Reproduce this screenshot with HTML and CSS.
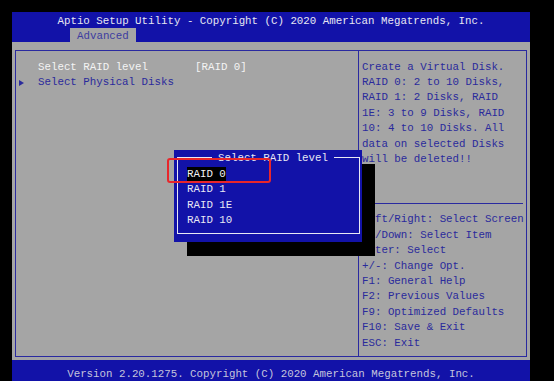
FILE: index.html
```html
<!DOCTYPE html>
<html>
<head>
<meta charset="utf-8">
<link rel="stylesheet" href="styles.css">
</head>
<body>
<div class="screen">
  <header class="top">
    <div class="title">Aptio Setup Utility - Copyright (C) 2020 American Megatrends, Inc.</div>
    <div class="tabs"><span class="tab">Advanced</span></div>
  </header>
  <main class="main">
    <div class="frame">
      <section class="left">
        <div class="row"><span class="gutter"></span><span class="label">Select RAID level</span><span class="value">[RAID 0]</span></div>
        <div class="row link"><span class="gutter"><span class="arrow"></span></span><span>Select Physical Disks</span></div>
      </section>
      <aside class="help">
        <div class="desc">
          <div>Create a Virtual Disk.</div>
          <div>RAID 0: 2 to 10 Disks,</div>
          <div>RAID 1: 2 Disks, RAID</div>
          <div>1E: 3 to 9 Disks, RAID</div>
          <div>10: 4 to 10 Disks. All</div>
          <div>data on selected Disks</div>
          <div>will be deleted!!</div>
        </div>
        <div class="sep"></div>
        <div class="keys">
          <div>Left/Right: Select Screen</div>
          <div>Up/Down: Select Item</div>
          <div>Enter: Select</div>
          <div>+/-: Change Opt.</div>
          <div>F1: General Help</div>
          <div>F2: Previous Values</div>
          <div>F9: Optimized Defaults</div>
          <div>F10: Save &amp; Exit</div>
          <div>ESC: Exit</div>
        </div>
      </aside>
    </div>
    <div class="popup">
      <div class="popup-border"></div>
      <div class="popup-title">Select RAID level</div>
      <ul class="options">
        <li><span class="sel">RAID 0</span></li>
        <li>RAID 1</li>
        <li>RAID 1E</li>
        <li>RAID 10</li>
      </ul>
    </div>
    <div class="mark"></div>
  </main>
  <footer class="foot">Version 2.20.1275. Copyright (C) 2020 American Megatrends, Inc.</footer>
</div>
</body>
</html>
```

FILE: styles.css
```css
html, body {
  margin: 0;
  padding: 0;
}
body {
  background: #000;
  width: 554px;
  height: 381px;
  overflow: hidden;
  font-family: "Liberation Mono", "DejaVu Sans Mono", monospace;
  font-size: 10.79px;
  line-height: 15.4px;
}
.screen {
  margin-left: 12px;
  padding-top: 12px;
  width: 518px;
}
.top {
  background: #1212a8;
  height: 30px;
}
.title {
  height: 16px;
  line-height: 19px;
  text-align: center;
  color: #e6e6f2;
  white-space: nowrap;
}
.tabs {
  height: 14px;
  padding-left: 58px;
}
.tab {
  display: inline-block;
  height: 14px;
  line-height: 16px;
  padding: 0 7px;
  background: #a5a5a5;
  color: #3c3ca0;
}
.main {
  position: relative;
  background: #a5a5a5;
  height: 318px;
  box-sizing: border-box;
  padding: 8px 3px 3px 3px;
}
.frame {
  height: 100%;
  box-sizing: border-box;
  border: 1px solid #2a2aa0;
  display: flex;
}
.left {
  width: 343px;
  box-sizing: border-box;
  border-right: 1px solid #2a2aa0;
  padding: 8.5px 0 0 3px;
}
.row {
  display: flex;
  height: 15.4px;
  white-space: nowrap;
  color: #f4f4f4;
}
.row.link {
  color: #2a2a9c;
}
.gutter {
  width: 19px;
  display: flex;
  align-items: center;
}
.arrow {
  width: 0;
  height: 0;
  border-top: 3.5px solid transparent;
  border-bottom: 3.5px solid transparent;
  border-left: 5px solid #2a2a9c;
}
.label {
  width: 157px;
}
.help {
  flex: 1;
  padding: 8.5px 0 0 3px;
  color: #2a2a9c;
  white-space: nowrap;
}
.sep {
  height: 1px;
  background: #2a2aa0;
  margin: 35.5px 3px 8.5px -2px;
}
.popup {
  position: absolute;
  left: 162px;
  top: 108px;
  width: 188px;
  height: 92px;
  background: #1212a8;
  box-shadow: 13px 14px 0 0 #000;
  color: #e8e8f4;
}
.popup-border {
  position: absolute;
  left: 3px;
  right: 2px;
  top: 7px;
  bottom: 8px;
  border: 1px solid #e8e8f4;
}
.popup-title {
  position: absolute;
  left: 38px;
  top: 1px;
  padding: 0 6px;
  background: #1212a8;
  white-space: nowrap;
}
.options {
  list-style: none;
  margin: 0;
  padding: 0;
  position: absolute;
  left: 13px;
  top: 16px;
}
.options li {
  height: 15.4px;
  line-height: 17px;
  white-space: nowrap;
}
.sel {
  display: inline-block;
  background: #000;
  color: #f4f4f4;
  height: 14px;
  line-height: 15px;
}
.mark {
  position: absolute;
  left: 155px;
  top: 116px;
  width: 104px;
  height: 25px;
  box-sizing: border-box;
  border: 2px solid #e8262b;
  border-radius: 3px;
}
.foot {
  background: #1212a8;
  height: 21px;
  box-sizing: border-box;
  padding-top: 7px;
  text-align: center;
  color: #c4c4dc;
  white-space: nowrap;
}
```
